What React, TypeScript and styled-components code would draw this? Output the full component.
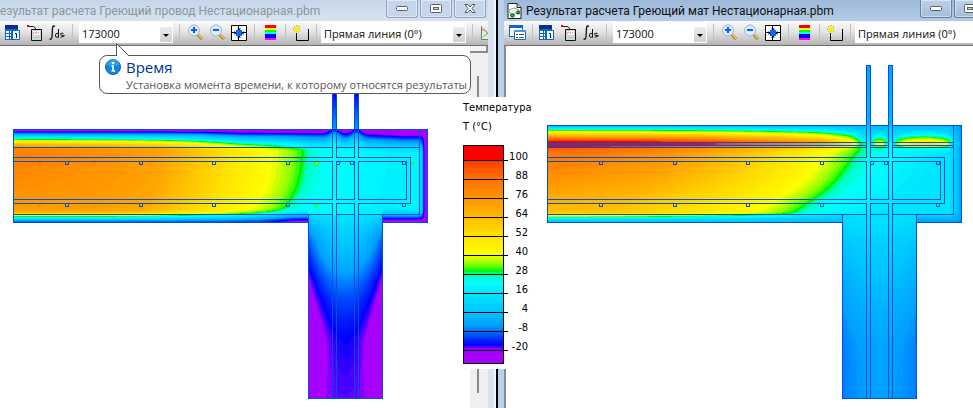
import React, { useMemo } from "react";
import styled, { createGlobalStyle } from "styled-components";

const GlobalStyle = createGlobalStyle`
  * { box-sizing: border-box; }
  body {
    margin: 0;
    background: #ffffff;
    font-family: "Noto Sans", "Open Sans", sans-serif;
    font-size: 12px;
    color: #000000;
  }
`;

/* ---------- temperature scale ---------- */

type Pair = [number, number];

const SCALE: [number, number, number, number][] = [
  [-20, 168, 0, 255],
  [-19, 96, 0, 255],
  [-17, 0, 0, 255],
  [-13, 0, 56, 250],
  [-8, 0, 122, 255],
  [-5, 0, 160, 255],
  [4, 0, 196, 255],
  [16, 0, 232, 255],
  [22, 0, 255, 255],
  [26, 0, 255, 200],
  [28, 0, 255, 120],
  [30, 0, 245, 0],
  [31, 40, 255, 0],
  [34, 140, 255, 0],
  [40, 255, 255, 0],
  [52, 255, 224, 0],
  [64, 255, 184, 0],
  [76, 255, 148, 0],
  [88, 255, 112, 0],
  [99, 255, 60, 0],
  [101, 255, 0, 0],
];

function lerp(points: Pair[], x: number): number {
  if (x <= points[0][0]) return points[0][1];
  for (let i = 1; i < points.length; i++) {
    const [x1, y1] = points[i];
    if (x <= x1) {
      const [x0, y0] = points[i - 1];
      return y0 + ((y1 - y0) * (x - x0)) / (x1 - x0);
    }
  }
  return points[points.length - 1][1];
}

function colorOf(t: number): string {
  const ch = [1, 2, 3].map((k) =>
    Math.round(lerp(SCALE.map((s) => [s[0], s[k]] as Pair), t))
  );
  return `rgb(${ch.join(",")})`;
}

/* ---------- temperature fields ---------- */

const bump = (x: number, c: number, w: number) => Math.exp(-(((x - c) / w) ** 2));

const WIRE_X: Pair[] = [[13, 83], [60, 80], [110, 77], [160, 71], [200, 59], [235, 49], [268, 41], [292, 34], [302, 30], [308, 26], [325, 22.5], [400, 18], [427, 20]];
const WIRE_TOP: Pair[] = [[1, 0], [2, 0.02], [3, 0.07], [5, 0.2], [7, 0.34], [9, 0.44], [10, 0.5], [12, 0.64], [15, 0.82], [20, 1]];
const WIRE_BOTTOM: Pair[] = [[0, 0.02], [1, 0.06], [2, 0.14], [4, 0.34], [6, 0.52], [8, 0.75], [10, 0.9], [13, 1]];
const WIRE_RIGHT: Pair[] = [[2, 0], [3, 0.05], [4, 0.2], [5, 0.5], [7, 0.85], [10, 1]];

/* Heating wires run across the slab in two rows. */
const WIRES: [number, number, number][] = [
  [39, 162, 9], [94, 162, 7], [150, 162, 6], [205, 162, 5], [316, 163, 18], [412, 163, 16],
  [39, 205, 7], [94, 205, 6], [150, 205, 5], [205, 205, 4], [316, 205, 14], [408, 205, 12],
];

function wireField(x: number, y: number): number {
  if (y < 129) return lerp([[94, -17], [110, -11], [129, -5]], y);
  if (y > 214 && x >= 308 && x <= 382) {
    const r = Math.abs(x - 345) / 37;
    const c = lerp([[214, 16], [230, 9], [250, 3], [280, -7], [300, -12], [320, -15], [338, -17], [365, -18], [398, -18.8]], y);
    const e = lerp([[214, 2], [222, 12], [240, 17], [265, 15], [300, 12], [345, 10], [398, 3.5]], y);
    return c - e * r * r;
  }
  const low = Math.max(0, (y - 155) / 60);
  let t = lerp(WIRE_X, x + 22 * low ** 3 + 5 * low);
  t -= lerp([[13, 9], [150, 2], [230, 0]], x) * low;
  for (const [wx, wy, heat] of WIRES) {
    if (Math.abs(x - wx) < 6 && Math.abs(y - wy) < 6) {
      t += heat * Math.exp(-((x - wx) ** 2 + (y - wy) ** 2) / 3);
    }
  }
  const shift = lerp([[200, 0], [240, 1], [320, 1], [362, 2], [405, 4]], x) - 5 * bump(x, 334, 6) - 5 * bump(x, 356, 6);
  let k = lerp(WIRE_TOP, y - 129 - shift) * lerp(WIRE_RIGHT, 427 - x);
  if (x < 308 || x > 382) {
    const loss = lerp([[220, 0], [285, 1], [308, 1.5], [382, 2], [415, 2]], x);
    k *= lerp(WIRE_BOTTOM, 222 - y - loss);
  }
  const base = y > 190 && x < 300 ? lerp([[260, -14], [290, -21]], x) : -21;
  return base + (t - base) * k;
}

const MAT_FRONT: Pair[] = [[142, 861], [150, 857], [160, 850], [170, 843], [180, 835], [190, 825], [200, 811], [210, 796], [222, 780]];
const MAT_X: Pair[] = [[-288, 76], [-185, 69], [-95, 54], [-50, 45], [-28, 39], [-8, 33], [0, 30], [5, 27], [18, 24], [45, 20], [90, 15]];

function matField(x: number, y: number): number {
  if (y < 125) return lerp([[65, -3], [125, 1]], y);
  if (y > 214 && x >= 842 && x <= 916) {
    const r = Math.abs(x - 879) / 37;
    const c = lerp([[214, 15], [240, 9], [280, 3], [320, -2], [345, -4], [398, -4.8]], y);
    const e = lerp([[214, 2], [250, 5], [300, 5], [340, 4], [398, 3]], y);
    return c - e * r * r;
  }
  const u = x - lerp(MAT_FRONT, y);
  let t = lerp(MAT_X, u) + (180 - y) * 0.38 * Math.min(1, Math.max(0, -u / 260));
  const dome = (c: number, w: number, h: number) => {
    const q = 1 - ((x - c) / w) ** 2;
    return q > 0 ? h * Math.sqrt(q) : 0;
  };
  let mat = lerp([[547, 112], [650, 107], [710, 101], [740, 94], [780, 85], [820, 72], [850, 48], [862, 26], [870, 18]], x);
  mat += dome(879, 8, 22) + dome(923, 30, 32);
  if (y < 142) {
    const k = (y - 125) / 17;
    t = -1 + (mat + 1) * k ** (x > 862 ? 1.3 : 1);
    if (x > 862) t = Math.max(t, 2 + 14 * k);
  } else {
    const near = y <= 145 ? 1 : Math.exp(-(y - 145) / 2);
    if (mat > t) t += (mat - t) * near;
  }
  const side = lerp([[0, 0.1], [3, 0.4], [6, 0.65], [12, 1]], 961 - x);
  t = -8 + (t + 8) * side;
  if (x < 842 || x > 916) {
    const k = lerp([[0, 0.02], [3, 0.2], [5, 0.42], [7, 0.7], [9, 0.92], [11, 1]], 222 - y);
    const cold = x > 916 ? -6 : 1;
    t = cold + (t - cold) * k;
  }
  return t;
}

interface Area {
  x: number;
  y: number;
  w: number;
  h: number;
}

/* Groups equal-temperature cells into one path per colour band. */
function isobands(field: (x: number, y: number) => number, areas: Area[]) {
  const bands = new Map<number, string[]>();
  for (const a of areas) {
    for (let y = a.y; y < a.y + a.h; y++) {
      let start = a.x;
      let level = NaN;
      for (let x = a.x; x <= a.x + a.w; x++) {
        let next = NaN;
        if (x < a.x + a.w) {
          const t = Math.max(-20, Math.min(102, field(x, y)));
          next = t < 0 ? Math.round(t * 2) / 2 : Math.round(t / 1.5) * 1.5;
        }
        if (next !== level) {
          if (!Number.isNaN(level)) {
            const list = bands.get(level) ?? [];
            list.push(`M${start} ${y}H${x}v1H${start}z`);
            bands.set(level, list);
          }
          start = x;
          level = next;
        }
      }
    }
  }
  return [...bands].map(([t, d]) => ({ level: t, color: colorOf(t), d: d.join("") }));
}

/* ---------- model geometry ---------- */

interface ModelProps {
  dx: number;
  top: number;
  rodTop: number;
  layers: number[];
  field: (x: number, y: number) => number;
  view: string;
  label: string;
}

const ModelSvg = styled.svg`
  display: block;
  flex: none;
`;

function Model({ dx, top, rodTop, layers, field, view, label }: ModelProps) {
  const bands = useMemo(
    () =>
      isobands(field, [
        { x: 13 + dx, y: top, w: 415, h: 223 - top },
        { x: 308 + dx, y: 223, w: 75, h: 176 },
        { x: 332 + dx, y: rodTop, w: 5, h: top - rodTop },
        { x: 354 + dx, y: rodTop, w: 5, h: top - rodTop },
      ]),
    [field, dx, top, rodTop]
  );

  const h = (y: number, a: number, b: number) => {
    const cuts = [[a, 332], [336, 354], [358, b]];
    return cuts.map(([p, q]) => `M${p + dx} ${y}.5H${q + dx + 1}`).join("");
  };
  const v = (x: number, a: number, b: number) => `M${x + dx}.5 ${a}V${b + 1}`;
  const lines = [
    h(top, 13, 427),
    ...layers.map((y) => h(y, 13, 419)),
    h(157, 13, 410),
    h(161, 13, 406),
    h(199, 13, 406),
    h(203, 13, 410),
    h(214, 13, 419),
    `M${13 + dx} 222.5H${309 + dx}M${382 + dx} 222.5H${428 + dx}`,
    `M${308 + dx} 398.5H${383 + dx}`,
    v(13, top, 222),
    v(427, top, 222),
    v(419, top, 214),
    v(410, 157, 203),
    v(406, 161, 199),
    v(308, 214, 398),
    v(382, 214, 398),
    ...[332, 336, 354, 358].map((x) => v(x, rodTop, 157) + v(x, 161, 199) + v(x, 203, 398)),
    `M${332 + dx} ${rodTop}.5h5M${354 + dx} ${rodTop}.5h5`,
  ].join("");
  const marks = [
    ...[67, 141, 214, 288, 338, 352, 404].map((x) => [x, 161]),
    ...[67, 141, 214, 288, 404].map((x) => [x, 203]),
  ]
    .map(([x, y]) => `M${x + dx - 2}.5 ${y + 1}v2.5h3v-2.5`)
    .join("");

  return (
    <ModelSvg width={view.split(" ")[2]} height="362" viewBox={view} shapeRendering="crispEdges" role="img" aria-label={label}>
      {bands.map((b) => (
        <path key={b.level} d={b.d} fill={b.color} />
      ))}
      <path d={lines + marks} fill="none" stroke="#0050dc" strokeWidth="1" />
    </ModelSvg>
  );
}

/* ---------- window chrome ---------- */

const Screen = styled.div`
  display: grid;
  grid-template-columns: minmax(0, 498px) minmax(0, 1fr);
  min-height: 100vh;
  overflow: hidden;
`;

const WindowFrame = styled.section<{ $active?: boolean }>`
  position: relative;
  display: flex;
  flex-direction: column;
  min-width: 0;
  background: ${(p) => (p.$active ? "#b9d0e9" : "#d7e3f0")};
  ${(p) =>
    p.$active
      ? "padding-left: 6px;"
      : "padding-right: 8px; border-right: 2px solid #000000; box-shadow: inset -2px 0 #f2f6fa;"}
`;

const TitleBar = styled.header<{ $active?: boolean }>`
  display: flex;
  align-items: center;
  height: 21px;
  padding-left: ${(p) => (p.$active ? "3px" : "0")};
  background: ${(p) =>
    p.$active
      ? "linear-gradient(#9db9d8, #b4cce6)"
      : "linear-gradient(#c6d6e8, #d7e3f0)"};
`;

const Title = styled.h1<{ $active?: boolean }>`
  flex: 1;
  min-width: 0;
  margin: 0 0 0 ${(p) => (p.$active ? "4px" : "0")};
  white-space: nowrap;
  font-family: Roboto, "Noto Sans", sans-serif;
  font-size: 12px;
  line-height: 20px;
  font-weight: 400;
  color: ${(p) => (p.$active ? "#101010" : "#8d959d")};
`;

const CaptionButtons = styled.div<{ $clipped?: boolean }>`
  display: flex;
  align-self: flex-start;
  flex: none;
  gap: 2px;
  margin-right: ${(p) => (p.$clipped ? "-47px" : "2px")};
`;

const CaptionButton = styled.button<{ $active?: boolean }>`
  display: flex;
  align-items: center;
  justify-content: center;
  width: 32px;
  height: 18px;
  padding: 0;
  border: 1px solid ${(p) => (p.$active ? "#64809f" : "#8fa5c2")};
  border-top: 0;
  border-radius: 0 0 3px 3px;
  background: ${(p) => (p.$active ? "linear-gradient(#bdd0e6, #a4bedb)" : "#c5d6ea")};
  box-shadow: inset 0 0 0 1px rgba(255, 255, 255, 0.45);
`;

const Toolbar = styled.div`
  display: flex;
  align-items: center;
  flex: none;
  height: 24px;
  padding: 0 0 1px 2px;
  overflow: hidden;
  background: linear-gradient(#fbfbfb, #e4e4e4 45%, #b4b4b4);
`;

const ToolButton = styled.button`
  display: flex;
  flex: none;
  align-items: center;
  justify-content: center;
  width: 22px;
  height: 22px;
  padding: 0;
  border: 0;
  background: transparent;
`;

const Separator = styled.span<{ $before?: number; $after?: number }>`
  flex: none;
  width: 1px;
  height: 17px;
  margin-left: ${(p) => p.$before ?? 4}px;
  margin-right: ${(p) => p.$after ?? 4}px;
  background: #c2c2c2;
`;

const ComboWrap = styled.span<{ $width: number }>`
  position: relative;
  flex: none;
  width: ${(p) => p.$width}px;
  height: 21px;
  background: #ffffff;

  &::before {
    content: "";
    position: absolute;
    right: 1px;
    bottom: 1px;
    width: 12px;
    height: 15px;
    background: linear-gradient(#ececec, #cfcfcf);
    pointer-events: none;
  }

  &::after {
    content: "";
    position: absolute;
    right: 4px;
    bottom: 6px;
    border: 3px solid transparent;
    border-top-color: #000000;
    border-bottom: 0;
    pointer-events: none;
  }
`;

const Combo = styled.select`
  appearance: none;
  width: 100%;
  height: 21px;
  padding: 2px 14px 0 3px;
  border: 0;
  background: transparent;
  font-family: "Open Sans", "Noto Sans", sans-serif;
  font-size: 11px;
  color: #101010;
`;

const Workspace = styled.div<{ $active?: boolean }>`
  display: flex;
  flex: 1;
  min-height: 0;
  overflow: hidden;
  background: #ffffff;
  border-top: 1px solid #707070;
  border-left: ${(p) => (p.$active ? "2px solid #8a8a8a" : "0")};
`;

const Splitter = styled.div`
  width: 18px;
  margin-left: auto;
  background: #efefef;
`;

const SplitHandle = styled.div`
  height: 7px;
  border: 1px solid #8a8a8a;
  border-width: 0 2px 2px 0;
  background: #f4f4f4;
`;

const ScrollThumb = styled.div`
  width: 2px;
  height: 317px;
  margin: 23px 0 0 7px;
  background: #8a8a8a;
`;

/* ---------- icons ---------- */

const Icon = styled.svg`
  display: block;
  flex: none;
`;

const FormIcon = () => (
  <Icon width="17" height="16" viewBox="0 0 17 16">
    <rect x=".5" y=".5" width="13" height="11" fill="#fff" stroke="#1467c4" />
    <path d="M0 0h14v3H0z" fill="#1467c4" />
    <path d="M5.500 5.500h11v9h-11z" fill="#fff" stroke="#1467c4" />
    <path d="M5 5h12v2H5z" fill="#4d94dd" />
    <path d="M7 9.500h2M10 9.500h5M7 12.500h2M10 12.500h5" stroke="#555" />
  </Icon>
);

const TableIcon = () => (
  <Icon width="16" height="16" viewBox="0 0 16 16">
    <path d="M0 0h13v15H0z" fill="#1467c4" />
    <path d="M0 0h13v4H0z" fill="#0a2e90" />
    <path d="M1 6h3v2H1zM1 9h3v2H1zM1 12h3v2H1zM5 6h1v2H5zM5 9h1v2H5zM5 12h1v2H5z" fill="#fff" />
    <path d="M7.500 5.500h7v9h-7z" fill="#e8ffff" stroke="#0b62c0" />
    <path d="M10 8.500h1.500V13" fill="none" stroke="#101060" />
  </Icon>
);

const MeterIcon = () => (
  <Icon width="16" height="16" viewBox="0 0 16 16">
    <path d="M1 1.500h5q2 0 3 3" fill="none" stroke="#222" />
    <path d="M0 0h2v2H0z" fill="#e00000" />
    <path d="M4.500 4.500h10v11h-10z" fill="#d4d4d4" stroke="#111" />
    <path d="M6 6h7v4H6z" fill="#fff" />
    <path d="M6 8.500l2-1.500 2 1.500 2-1.500" fill="none" stroke="#d02020" strokeDasharray="1 1" />
    <path d="M7 12.500h5" stroke="#8adada" />
  </Icon>
);

const IntegralIcon = () => (
  <Icon width="16" height="16" viewBox="0 0 16 16" fill="none" stroke="#111">
    <path d="M6 1.500q-2-1.500-2.500 1.500L3 12q-.5 3-2.500 2" strokeWidth="1.300" />
    <path d="M9.500 4v8.500M9.500 8.500q-3-1-3 1.500v1q0 2 3 1M14.500 8.500q-3-1-3 .6t3 1.500-3 1.700" />
  </Icon>
);

const ZoomIcon = ({ plus }: { plus?: boolean }) => (
  <Icon width="17" height="17" viewBox="0 0 17 17">
    <path d="M10 10l5 5" stroke="#9a7c38" strokeWidth="3" />
    <path d="M11 10.500l4 4" stroke="#ffca45" strokeWidth="1.500" />
    <circle cx="7" cy="6.500" r="5.500" fill="#dcecff" stroke="#9db4d8" />
    <path d={plus ? "M4 6h6M7 3v6" : "M4 6h6"} stroke="#0860e8" strokeWidth="2" />
  </Icon>
);

const FitIcon = () => (
  <Icon width="16" height="16" viewBox="0 0 16 16">
    <path d="M.5.5h15v15H.5z" fill="#fff" stroke="#000" />
    <path d="M5 5h6v6H5z" fill="#006dff" />
    <path d="M7.500 1v4M7.500 15v-4M1 7.500h4M15 7.500h-4" stroke="#000" />
    <path d="M6 3.500h4L8 5.500zM6 12.500h4l-2-2zM3.500 6v4l2-2zM12.500 6v4l-2-2z" fill="#000" />
  </Icon>
);

const PaletteIcon = () => (
  <Icon width="11" height="15" viewBox="0 0 11 15" shapeRendering="crispEdges">
    <path d="M0 0h11v3H0z" fill="#f00" />
    <path d="M0 3h11v2H0z" fill="#ff0" />
    <path d="M0 5h11v2H0z" fill="#0f0" />
    <path d="M0 7h11v2H0z" fill="#0ff" />
    <path d="M0 9h11v4H0z" fill="#00f" />
    <path d="M0 13h11v2H0z" fill="#f0f" />
  </Icon>
);

const ContourIcon = () => (
  <Icon width="17" height="16" viewBox="0 0 17 16" fill="none">
    <path d="M3.500 8v7.500h12V4" stroke="#000" />
    <path d="M4 0v8M0 4h8M1 1l6 6M7 1L1 7" stroke="#8a8a30" strokeDasharray="1 1" />
    <path d="M4 1v6M1 4h6M2 2l4 4M6 2L2 6" stroke="#ffee00" strokeWidth="1.500" />
  </Icon>
);

const ChartIcon = () => (
  <Icon width="16" height="16" viewBox="0 0 16 16" fill="none">
    <path d="M2 2h14v12H2z" fill="#d9f0dd" />
    <path d="M1.500 1v13.500H16" stroke="#777" />
    <path d="M2 4q4 1 6 5t8 5" stroke="#e04040" />
    <path d="M3 12q4-5 9-4" stroke="#70a878" />
  </Icon>
);

const DocumentIcon = () => (
  <Icon width="15" height="16" viewBox="0 0 15 16">
    <path d="M1 .5h9l4 4v11H1z" fill="#fff" stroke="#222" />
    <path d="M10 .5v4h4" fill="#ccc" stroke="#222" />
    <path d="M2 7l5-2 5 2 1 4-3-1-4 2-4-3z" fill="#eef4ee" stroke="#999" />
    <circle cx="5.500" cy="12.500" r="1.800" fill="#20b040" stroke="#105018" />
    <circle cx="11" cy="9.500" r="1.500" fill="#20b040" stroke="#105018" />
  </Icon>
);

const InfoIcon = () => (
  <Icon width="16" height="16" viewBox="0 0 16 16">
    <circle cx="8" cy="8" r="7.500" fill="#1186d8" stroke="#0a66b5" />
    <path d="M2 6a6 6 0 0 1 12 0q-6 2-12 0z" fill="#4fb0ee" opacity=".6" />
    <circle cx="8" cy="4" r="1.300" fill="#fff" />
    <path d="M6.500 7H8v5M6.500 12h3.500" fill="none" stroke="#fff" strokeWidth="1.600" />
  </Icon>
);

const MinimizeGlyph = () => (
  <Icon width="12" height="6" viewBox="0 0 12 6">
    <rect x=".5" y=".5" width="11" height="4" rx="1" fill="#fff" stroke="#59606b" />
  </Icon>
);

const RestoreGlyph = () => (
  <Icon width="12" height="10" viewBox="0 0 12 10">
    <rect x=".5" y=".5" width="11" height="8" rx="1" fill="#fff" stroke="#59606b" />
    <rect x="3.500" y="3.500" width="5" height="2" fill="#c5d6ea" stroke="#59606b" />
  </Icon>
);

const CloseGlyph = () => (
  <Icon width="12" height="10" viewBox="0 0 12 10">
    <path d="M1 .5h3l2 2.500 2-2.500h3L8 4.500l3 4H8L6 6 4 8.500H1l3-4z" fill="#fff" stroke="#59606b" />
  </Icon>
);

/* ---------- hint balloon ---------- */

const Balloon = styled.aside`
  position: absolute;
  left: 99px;
  top: 55px;
  display: grid;
  grid-template-columns: 16px auto;
  column-gap: 5px;
  width: 372px;
  height: 39px;
  padding: 3px 0 0 5px;
  border: 1px solid #585858;
  border-radius: 8px;
  background: #ffffff;
`;

const Pointer = styled.svg`
  position: absolute;
  left: 15px;
  top: -14px;
`;

const BalloonTitle = styled.strong`
  font-family: "Open Sans", sans-serif;
  font-size: 15px;
  line-height: 17px;
  font-weight: 400;
  color: #003399;
`;

const BalloonText = styled.p`
  grid-column: 2;
  margin: 0;
  white-space: nowrap;
  font-family: "Open Sans", sans-serif;
  font-size: 11px;
  line-height: 17px;
  color: #575757;
`;

/* ---------- legend ---------- */

const Legend = styled.aside`
  position: absolute;
  left: -37px;
  top: 97px;
  width: 85px;
  padding: 1px 18px 5px 2px;
  background: #ffffff;
  font-family: "DejaVu Sans Condensed", "DejaVu Sans", sans-serif;
  font-size: 11px;
  line-height: 19px;
  white-space: nowrap;
`;

const LegendTitle = styled.div`
  margin: 0;
`;

const LegendBody = styled.div`
  display: flex;
  justify-content: space-between;
  margin-top: 9px;
`;

const LegendLabels = styled.ul`
  margin: 2px 0 0;
  padding: 0;
  list-style: none;
  text-align: right;
`;

const TICKS = [100, 88, 76, 64, 52, 40, 28, 16, 4, -8, -20];

function LegendBar() {
  const rows = Array.from({ length: 95 }, (_, i) => {
    const t = 99 - (i * 2 * 12) / 19;
    return <path key={i} d={`M0 ${15 + i * 2}h41v2H0z`} fill={colorOf(t)} />;
  });
  return (
    <Icon width="46" height="219" viewBox="0 0 46 219" shapeRendering="crispEdges">
      <path d="M0 0h41v16H0z" fill="#ff0000" />
      {rows}
      <path d="M0 205h41v14H0z" fill="#a800ff" />
      <path
        d={"M.5.5h40v218H.5z" + TICKS.map((_, i) => `M0 ${15 + i * 19}.5H45`).join("")}
        fill="none"
        stroke="#000"
      />
    </Icon>
  );
}

/* ---------- page ---------- */

function Captions({ active }: { active?: boolean }) {
  return (
    <CaptionButtons $clipped={active}>
      <CaptionButton $active={active} aria-label="Свернуть"><MinimizeGlyph /></CaptionButton>
      <CaptionButton $active={active} aria-label="Восстановить"><RestoreGlyph /></CaptionButton>
      <CaptionButton $active={active} aria-label="Закрыть"><CloseGlyph /></CaptionButton>
    </CaptionButtons>
  );
}

function Tools({ active }: { active?: boolean }) {
  return (
    <Toolbar role="toolbar">
      {active && (
        <>
          <ToolButton aria-label="Окна"><FormIcon /></ToolButton>
          <Separator $after={3} />
        </>
      )}
      <ToolButton aria-label="Таблица"><TableIcon /></ToolButton>
      <ToolButton aria-label="Измерение"><MeterIcon /></ToolButton>
      <ToolButton aria-label="Интеграл"><IntegralIcon /></ToolButton>
      <Separator $after={6} />
      <ComboWrap $width={94}>
        <Combo aria-label="Время" defaultValue="173000">
          <option>173000</option>
        </Combo>
      </ComboWrap>
      <Separator $before={6} />
      <ToolButton aria-label="Увеличить"><ZoomIcon plus /></ToolButton>
      <ToolButton aria-label="Уменьшить"><ZoomIcon /></ToolButton>
      <ToolButton aria-label="Показать всё"><FitIcon /></ToolButton>
      <Separator />
      <ToolButton aria-label="Палитра"><PaletteIcon /></ToolButton>
      <Separator />
      <ToolButton aria-label="Новый контур"><ContourIcon /></ToolButton>
      <Separator />
      <ComboWrap $width={145}>
        <Combo aria-label="Тип линии" defaultValue="line">
          <option value="line">Прямая линия (0°)</option>
        </Combo>
      </ComboWrap>
      <Separator $before={6} />
      <ToolButton aria-label="График"><ChartIcon /></ToolButton>
    </Toolbar>
  );
}

export default function App() {
  return (
    <>
      <GlobalStyle />
      <Screen>
        <WindowFrame>
          <TitleBar>
            <Title>езультат расчета Греющий провод Нестационарная.pbm</Title>
            <Captions />
          </TitleBar>
          <Tools />
          <Workspace>
            <Model
              dx={0}
              top={129}
              rodTop={88}
              layers={[147]}
              field={wireField}
              view="0 46 470 362"
              label="Греющий провод"
            />
            <Splitter>
              <SplitHandle />
              <ScrollThumb />
            </Splitter>
          </Workspace>
          <Balloon role="tooltip">
            <Pointer width="18" height="16" viewBox="0 0 18 16">
              <path d="M1.500 15.500V1.500L15 15.500" fill="#fff" />
              <path d="M1.500 14V1.500L14 14" fill="none" stroke="#585858" />
            </Pointer>
            <InfoIcon />
            <BalloonTitle>Время</BalloonTitle>
            <BalloonText>Установка момента времени, к которому относятся результаты</BalloonText>
          </Balloon>
        </WindowFrame>
        <WindowFrame $active>
          <TitleBar $active>
            <DocumentIcon />
            <Title $active>Результат расчета Греющий мат Нестационарная.pbm</Title>
            <Captions active />
          </TitleBar>
          <Tools active />
          <Workspace $active>
            <Model
              dx={534}
              top={125}
              rodTop={65}
              layers={[142, 145, 147]}
              field={matField}
              view="506 46 467 362"
              label="Греющий мат"
            />
          </Workspace>
          <Legend>
            <LegendTitle>Температура</LegendTitle>
            <LegendTitle>T (°C)</LegendTitle>
            <LegendBody>
              <LegendBar />
              <LegendLabels>
                {TICKS.map((t) => (
                  <li key={t}>{t}</li>
                ))}
              </LegendLabels>
            </LegendBody>
          </Legend>
        </WindowFrame>
      </Screen>
    </>
  );
}
